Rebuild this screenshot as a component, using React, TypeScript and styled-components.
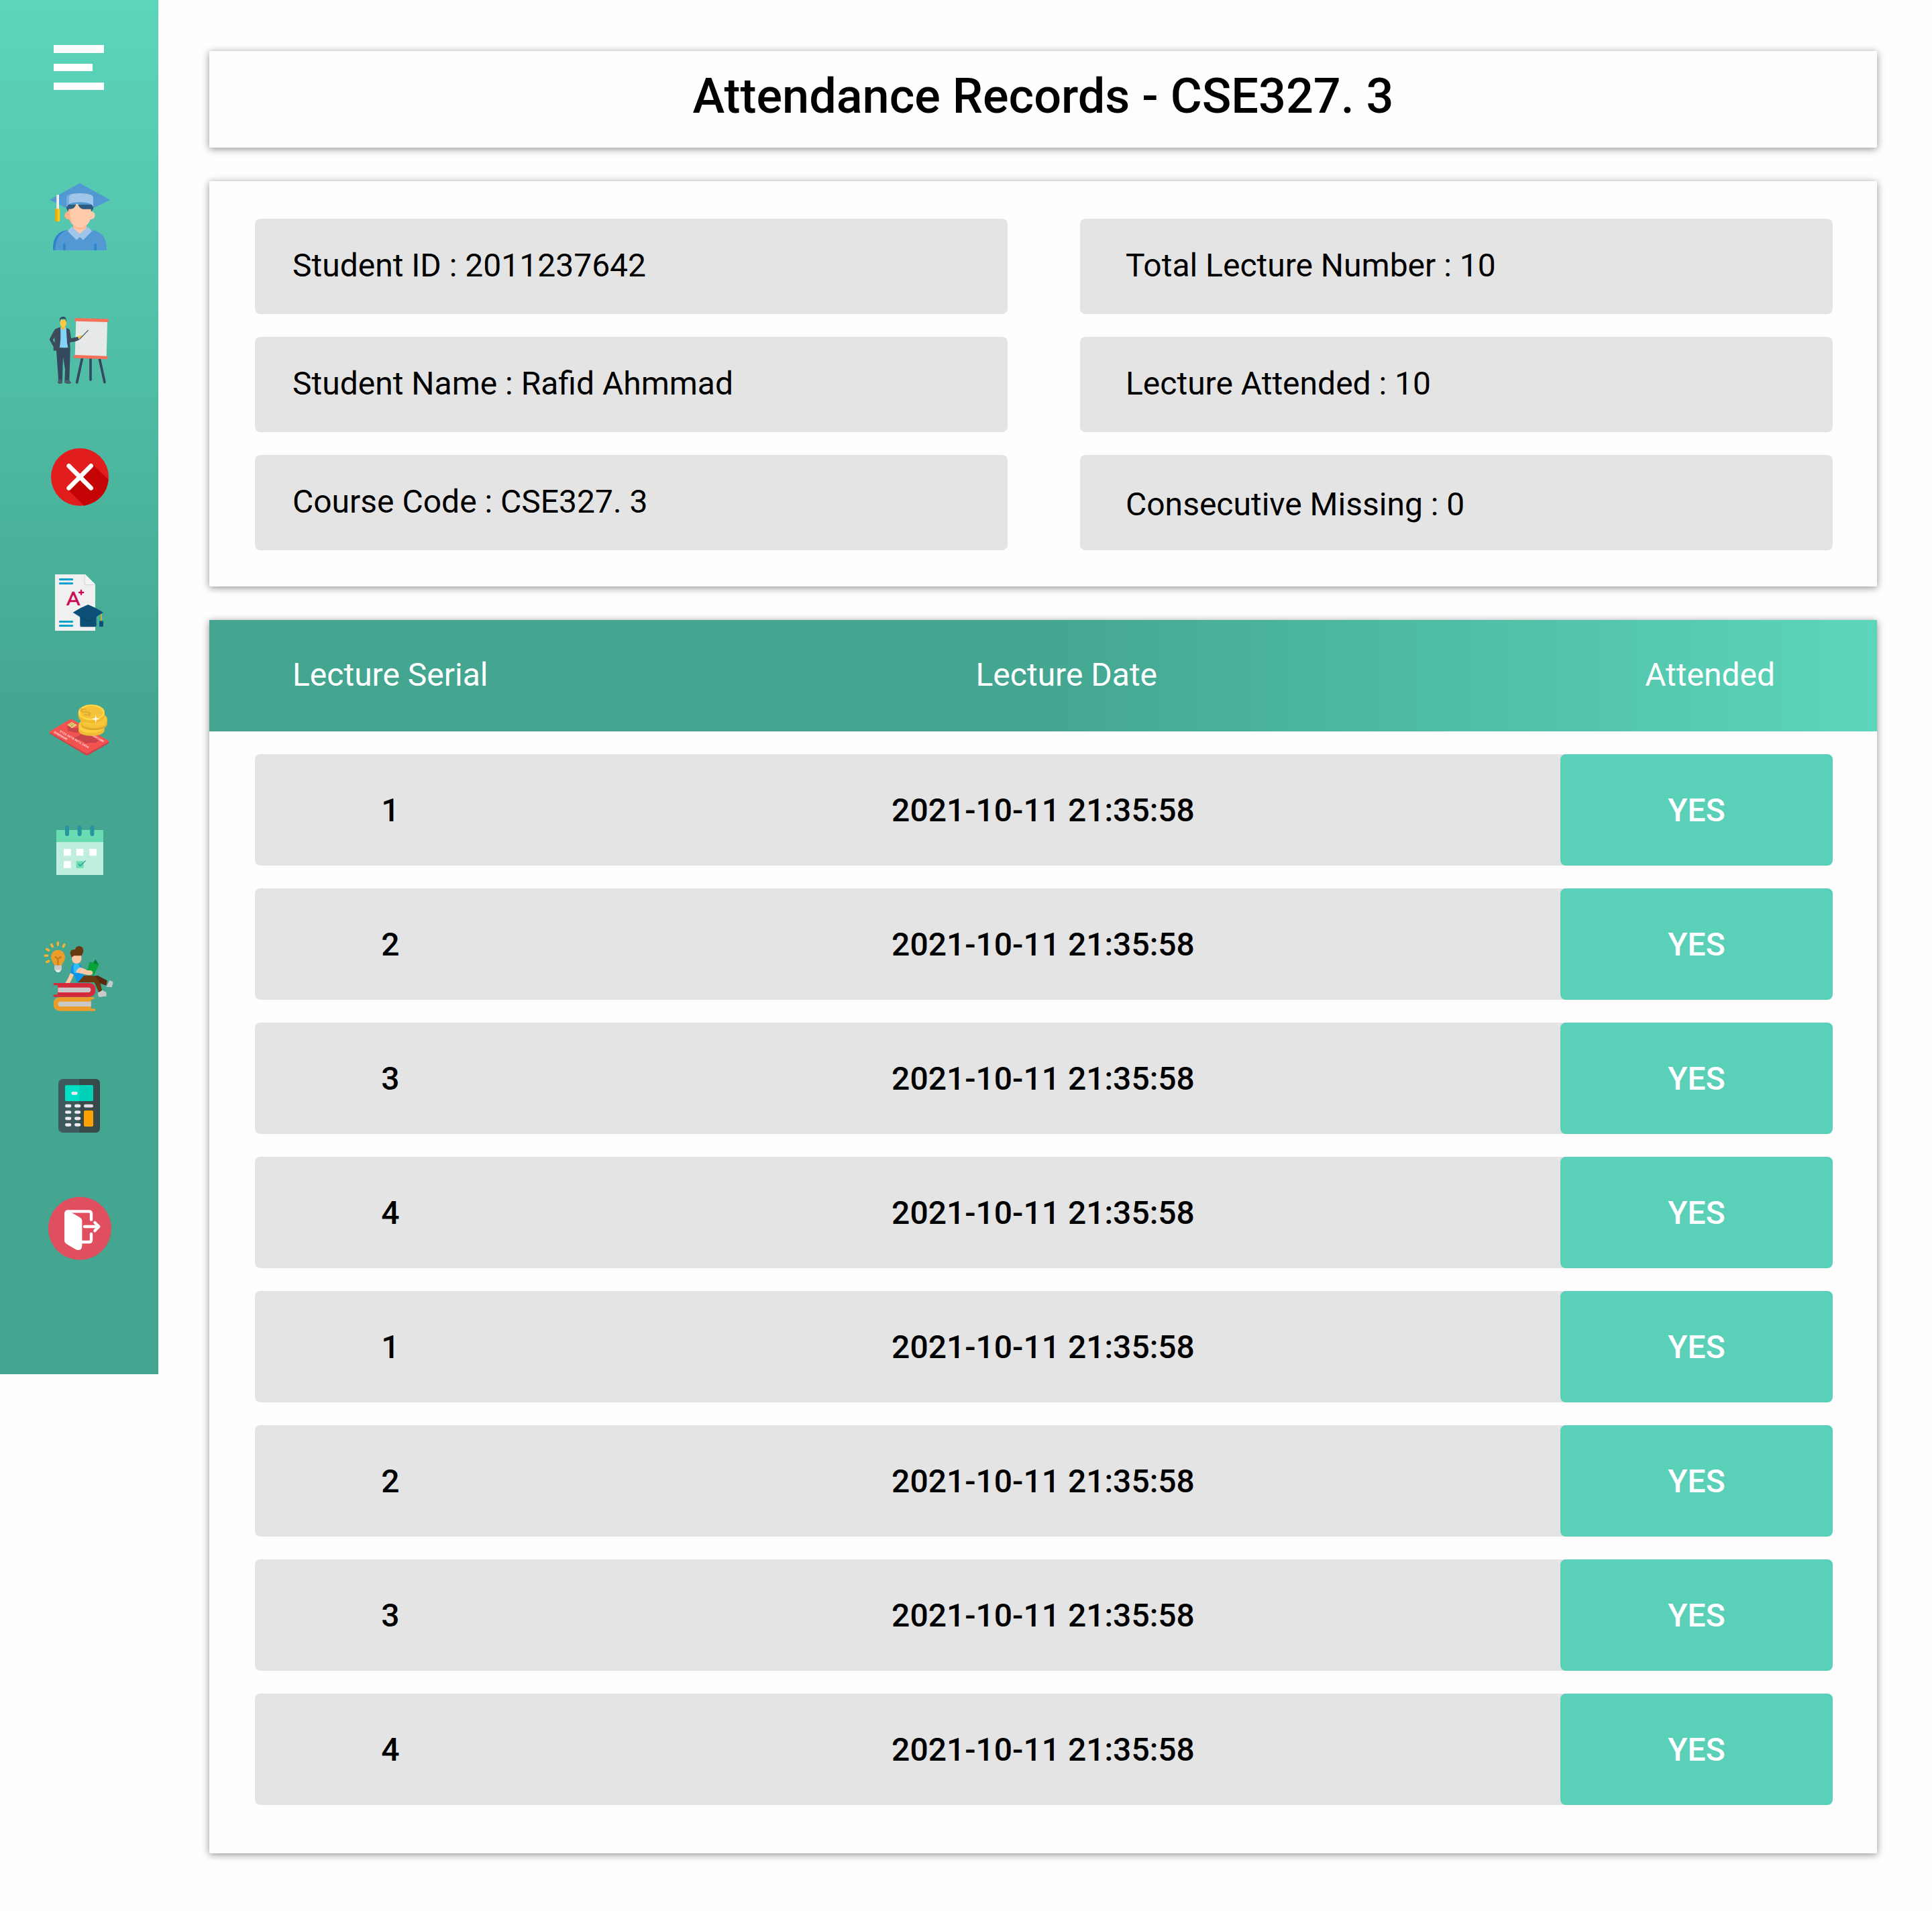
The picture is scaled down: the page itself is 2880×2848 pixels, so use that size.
import React from "react";
import styled, { createGlobalStyle } from "styled-components";

const GlobalStyle = createGlobalStyle`
  *, *::before, *::after { box-sizing: border-box; }
  body { margin: 0; background: #fefefe; font-family: Roboto, "Liberation Sans", sans-serif; color: #000; }
  h1, p { margin: 0; font-weight: inherit; }
`;

const Page = styled.div`
  display: flex;
  align-items: flex-start;
  width: 2880px;
  height: 2848px;
  overflow: hidden;
`;

const Sidebar = styled.nav`
  display: flex;
  flex-direction: column;
  flex: none;
  width: 236px;
  height: 2048px;
  padding: 67px 0 0 50px;
  background: linear-gradient(to bottom, #5cd6bb 0%, #44a691 52%);
`;

const Glyph = styled.svg<{ $h: number; $gap: number }>`
  display: block;
  flex: none;
  width: 140px;
  height: ${(p) => p.$h}px;
  margin-top: ${(p) => p.$gap}px;
`;

const MenuButton = styled.div`
  display: flex;
  flex-direction: column;
  justify-content: space-between;
  height: 67px;
  margin-left: 30px;
`;

const Bar = styled.span<{ $w: number }>`
  width: ${(p) => p.$w}px;
  height: 11.5px;
  background: #fff;
`;

const Main = styled.main`
  display: flex;
  flex-direction: column;
  gap: 50px;
  width: 2486px;
  margin: 76px 0 0 76px;
`;

const Card = styled.section`
  border-radius: 2px;
  background: #fefefe;
  box-shadow: 0 2px 12px rgba(0, 0, 0, 0.44);
`;

const TitleCard = styled(Card)`
  display: flex;
  justify-content: center;
  height: 144px;
  padding-top: 26px;
`;

const Title = styled.h1`
  font-size: 72px;
  line-height: 84px;
  font-weight: 500;
`;

const InfoCard = styled(Card)`
  display: grid;
  grid-template-columns: 1122px 1122px;
  grid-auto-rows: 142px;
  column-gap: 108px;
  row-gap: 34px;
  height: 604px;
  padding: 56px 66px 0 68px;
`;

const Field = styled.p<{ $indent: number; $drop?: number }>`
  padding: ${(p) => 42 + (p.$drop ?? 0)}px 0 0 ${(p) => p.$indent}px;
  border-radius: 8px;
  background: #e4e4e4;
  font-size: 48px;
  line-height: 56px;
`;

const TableCard = styled(Card)`
  height: 1838px;
`;

const HeadRow = styled.div`
  display: flex;
  justify-content: space-between;
  height: 166px;
  padding: 54px 152px 0 124px;
  background: linear-gradient(to left, #5cd6bb 0%, #44a691 50%);
  color: #fff;
  font-size: 48px;
  line-height: 56px;
`;

const Rows = styled.div`
  display: flex;
  flex-direction: column;
  gap: 34px;
  padding: 34px 66px 0 68px;
`;

const Row = styled.div`
  display: grid;
  grid-template-columns: 404px 1542px 406px;
  height: 166px;
  border-radius: 8px;
  background: #e4e4e4;
  font-size: 48px;
  line-height: 56px;
  font-weight: 500;
  text-align: center;
`;

const Cell = styled.div`
  padding-top: 56px;
`;

const Status = styled(Cell)`
  border-radius: 8px;
  background: #5bd0b8;
  color: #fff;
`;

const StudentIcon = () => (
  <Glyph viewBox="0 0 420 420" $h={140} $gap={116}>
    <path d="M72 143 207 69 342 143 268 180H146Z" fill="#5299d4" />
    <path d="M147 165h120v20l-8 10H155l-8-12z" fill="#2f5d82" />
    <path d="M148 176V134q0-20 59-20t60 20v42q-8-22-60-22t-59 22z" fill="#9fc5e8" />
    <path d="M148 176V134q0-14 24-17-14 7-14 18v28z" fill="#76acdc" />
    <path d="M177 240h60v40l-30 20-30-20z" fill="#ffb48c" />
    <path d="M177 268q30 12 60 0v20l-30 12-30-12z" fill="#ffcbaa" />
    <circle cx="157" cy="213" r="18" fill="#ffb28a" />
    <circle cx="257" cy="213" r="18" fill="#ffcbaa" />
    <path d="M157 185q28 2 34-24h7q6 22 24 24h35v28q-4 51-50 52-46-1-50-52z" fill="#ffcbaa" />
    <path d="M157 185h6v30q2 28 18 42-24-15-24-44z" fill="#ffb28a" />
    <path d="M87 366q-3-80 73-88l47 20 50-20q72 8 70 88 0 3-3 3H90q-3 0-3-3z" fill="#5299d4" />
    <path d="M87 366q-3-80 66-88-56 20-56 91h-7q-3 0-3-3z" fill="#3284c8" />
    <path d="M132 369v-26q0-4 5-4t6 4v26zM271 369v-26q0-4 5-4t6 4v26z" fill="#3284c8" />
    <path d="M177 262h60l-30 33z" fill="#ffcbaa" />
    <path d="M177 262q30 14 60 0l-6 8q-24 10-48 0z" fill="#ffb48c" />
    <path d="M171 263 207 295 242 263 262 283 222 323 207 310 192 323 152 283Z" fill="#9fc5e8" />
    <path d="M102 123l12-4v66h-12z" fill="#efefef" />
    <path d="M102 123l4-2v64h-4z" fill="#d8dee0" />
    <rect x="96" y="184" width="22" height="56" rx="4" fill="#ffc721" />
    <path d="M100 184h7v56h-7q-4 0-4-4v-48q0-4 4-4z" fill="#e8ac0b" />
  </Glyph>
);

const TeacherIcon = () => (
  <Glyph viewBox="0 0 420 420" $h={140} $gap={60}>
    <g stroke="#34495e" strokeWidth="11" strokeLinecap="round">
      <path d="M217 254 194 360M255 252V348M295 254 318 359" />
    </g>
    <path d="M190 84 330 88 326 243 185 240Z" fill="#e7e9e8" />
    <path d="M190 79 329 83M186 244 326 249" stroke="#f3705a" strokeWidth="14" strokeLinecap="round" />
    <path d="M101 205h61l2 20-4 125 8 13q-20 5-29-2l2-60-9-56-3 100-1 18q-10 4-19 0l2-20z" fill="#34495e" />
    <path d="M112 347h14l2 16q-10 5-19 0zM142 349h16l10 11q0 6-12 5l-17-4z" fill="#4b5d6f" />
    <path d="M119 114h28l9 88q-20 5-39 0z" fill="#84d3f8" />
    <path d="M121 111l-24 10q-8 10-26 47l18 32 0 17 22 3q13-28 9-109z" fill="#3e4b5d" />
    <path d="M146 115l15 8q5 20 7 40l31-8 5 15q-20 10-41 10l1 38-7-4-7-30z" fill="#3e4b5d" />
    <path d="M94 158l-8 12 9 13z" fill="#50bba4" />
    <path d="M119 80h27v22l-6 10v9q-7 5-15 0v-10l-6-10z" fill="#fcca45" />
    <path d="M117 92V76q3-10 16-10 12 0 13 12v14l-4-16h-20z" fill="#34495e" />
    <path d="M125 111q8 4 15 0v8q-8 8-16 1z" fill="#efb839" />
    <path d="M198 156q12-11 23-5-2 9-18 14z" fill="#fcca45" />
    <path d="M206 166 244 127" stroke="#34495e" strokeWidth="3.5" strokeLinecap="round" />
  </Glyph>
);

const CrossIcon = () => (
  <Glyph viewBox="0 0 420 420" $h={140} $gap={50}>
    <circle cx="207" cy="213" r="129" fill="#e21d1d" />
    <path d="M265 157 335 225Q324 318 226 341L152 268Z" fill="#c50505" />
    <path d="M158 163 257 262M257 163 158 262" stroke="#fff" strokeWidth="20" strokeLinecap="round" />
  </Glyph>
);

const GradesIcon = () => (
  <Glyph viewBox="0 600 420 360" $h={120} $gap={60}>
    <path d="M99 648H231L276 693V900H99q-3 0-3-3V651q0-3 3-3z" fill="#f0f0f0" />
    <path d="M228 650v40q0 5 5 5h42" fill="none" stroke="#d2d2d2" strokeWidth="3" />
    <path d="M231 648 276 692H235q-4 0-4-4z" fill="#f4f4f4" />
    <path d="M118 670.5h55M118 688.5h55M118 859.5h55M118 877.5h55" stroke="#06a2cd" strokeWidth="9" strokeLinecap="round" />
    <text
      x="146"
      y="786"
      fontSize="85"
      fontFamily="Roboto, sans-serif"
      fontWeight="400"
      fill="#c90b52"
      stroke="#c90b52"
      strokeWidth="1.5"
      strokeLinejoin="round"
      textLength="63"
      lengthAdjust="spacingAndGlyphs"
    >
      A
    </text>
    <path d="M204 729h19M213 719v19" stroke="#c90b52" strokeWidth="7" strokeLinecap="round" />
    <path d="M174 820l34 22v43h66v-10z" fill="#c8ccd0" />
    <path d="M208 834h73v42q0 6-6 6h-61q-6 0-6-6z" fill="#0c5078" />
    <path d="M207 836 244 858 281 836" stroke="#083f62" strokeWidth="4" fill="none" />
    <path d="M176 818Q210 796 244 783 280 797 312 818 280 840 244 855 208 840 176 818Z" fill="#0c5078" />
    <path d="M303 826v32" stroke="#d6b02c" strokeWidth="5.5" />
    <rect x="294" y="856" width="18" height="26" rx="5" fill="#0c5078" />
  </Glyph>
);

const FeesIcon = () => (
  <Glyph viewBox="0 0 420 360" $h={120} $gap={70}>
    <path d="M72 185l94-50 170 90v8l-91 53q-6 3-12 0L72 190z" fill="#c9434a" />
    <path d="M72 180 162 127q6-3 12 0L336 222q1 3-2 5l-89 50q-6 3-12 0L74 186q-3-3-2-6z" fill="#f05350" />
    <path d="M150 160q14-10 30 6l20-2 8 16-16 6-20-4-18-4zM184 208l30-16 50 8 28 22-16 10-22-2-20 4-24-16-24-4z" fill="#c9434a" />
    <path d="M151 150 172 138 195 152 172 166Z" fill="#ecd17b" />
    <path d="M158 146l22 14M166 158l20-12M160 151l12-8M174 141l-4 20" stroke="#a8843c" strokeWidth="1.5" />
    <g fill="#fbd9d8" fontFamily="Roboto, sans-serif" fontWeight="700">
      <text transform="matrix(.87 .5 -.4 .85 116 182)" fontSize="14" textLength="148">0123 5678 9012 3456</text>
      <text transform="matrix(.87 .5 -.4 .85 90 186)" fontSize="13" textLength="68">SURENAME</text>
      <text transform="matrix(.87 .5 -.4 .85 252 195)" fontSize="13" textLength="70">CREDIT CARD</text>
    </g>
    <path d="M201 155v20c0 34 116 34 116 0v-20z" fill="#f0bd35" />
    <ellipse cx="259" cy="155" rx="58" ry="32" fill="#ffcf40" />
    <path d="M211 130v18c0 36 118 36 118 0v-22z" fill="#dfaa2b" />
    <ellipse cx="270" cy="126" rx="59" ry="34" fill="#f7c73a" />
    <path d="M211 130v9c0 36 118 36 118 0v-9c0 34-118 34-118 0z" fill="#f5c238" />
    <path d="M200 95v16c0 42 118 42 118 0V95z" fill="#f0b92f" />
    <ellipse cx="259" cy="95" rx="59" ry="35" fill="#ffd54a" />
    <ellipse cx="259" cy="95" rx="50" ry="28" fill="#f5c338" />
    <text transform="matrix(.9 -.35 .75 .66 232 114)" fontSize="60" fontFamily="Roboto, sans-serif" fontWeight="700" fill="#dfaa30">$</text>
    <path d="M278 106 281 121 296 125 281 128 278 143 275 128 260 125 275 121Z" fill="#fff" />
  </Glyph>
);

const CalendarIcon = () => (
  <Glyph viewBox="0 540 420 360" $h={120} $gap={60}>
    <path d="M102 622h210v200H102z" fill="#bfeedf" />
    <path d="M102 622h210v53H102z" fill="#69ddb1" />
    <path d="M150 609v30M206 609v30M262 609v30" stroke="#25969c" strokeWidth="18" strokeLinecap="round" />
    <path d="M135 705h32v31h-32zM191 705h32v31h-32zM250 705h32v31h-32zM135 760h32v31h-32z" fill="#fff" />
    <path d="M191 760h33v31h-33z" fill="#69ddb1" />
    <path d="M201 773 209 781 233 758" fill="none" stroke="#25919a" strokeWidth="3.5" />
  </Glyph>
);

const LearningIcon = () => (
  <Glyph viewBox="0 0 420 420" $h={140} $gap={60}>
    <path d="M109 45v10M80 53l5 9M138 53l-5 9M59 74l9 5M52 103h10M59 131l9-4" stroke="#ffb032" strokeWidth="10.5" strokeLinecap="round" />
    <path d="M109 77c18 0 32 14 32 32 0 16-8 22-15 37H93c-6-15-15-21-15-37 0-18 13-32 31-32z" fill="#ec9c2b" />
    <path d="M97 108l12 10 13-10M109 118v28" fill="none" stroke="#c27b20" strokeWidth="7" strokeLinecap="round" />
    <path d="M93 146h33v20H93z" fill="#c9c9c9" />
    <path d="M96 166h27q-2 11-13 11t-14-11z" fill="#ececec" />
    <path d="M240 196l48-4 41 22 0 2-4 20-29-10q-12-8-56-30z" fill="#54290d" />
    <path d="M196 222 215 192H262q26 6 36 34l8 32-14 8-20-44z" fill="#66390f" />
    <path d="M340 213l15 6q2 4-5 25l-24-2q-2-4 4-8zM308 257l17 10v16q-2 3-32 4-4-3-5-20 6 0 20-10z" fill="#c9c9c9" />
    <path d="M166 178l14 8q-8 24-18 39h-20q14-20 24-47z" fill="#ffc7a6" />
    <path d="M178 138q-12 16-13 42l16 8 15 36 29-31-14-48z" fill="#0d94e8" />
    <path d="M183 137q20-4 25 18l-10 24-16 3q-8-28 1-45z" fill="#35bdfb" />
    <path d="M172 100h42v18q-2 20-22 20t-20-20z" fill="#ffc7a6" />
    <path d="M170 110q-2-8-6-16-2-20 22-19 4-16 20-15 24 5 14 32l-5 11h-34z" fill="#66390f" />
    <path d="M277 119l14 23-5 2-20-8z" fill="#057f2f" />
    <path d="M252 130l40 15-23 47-32-16z" fill="#08a33b" />
    <path d="M209 155q20 5 29 13l16 1q14 3 10 14-3 8-20 6l-54-11q0-14 19-23z" fill="#ffc7a6" />
    <path d="M93 225H246q31 0 31 31t-31 31H93q-5 0-5-5t5-5h15v-42H93q-5 0-5-5t5-5z" fill="#d52a3c" />
    <path d="M109 245H246q10 0 10 11t-10 11H109z" fill="#c9c9c9" />
    <path d="M120 288H268q4 0 4 5t-4 5h-11v42h16q4 0 4 5t-4 5H120q-31 0-31-31t31-31z" fill="#ec9c2b" />
    <path d="M257 308H120q-10 0-10 11t10 11h137z" fill="#c9c9c9" />
    <path d="M256 222h18l18 44 14-8-8-32-14-20h-28z" fill="#66390f" />
    <path d="M308 257l17 10v16q-2 3-32 4-4-3-5-20 6 0 20-10z" fill="#c9c9c9" />
  </Glyph>
);

const CalculatorIcon = () => (
  <Glyph viewBox="0 0 420 360" $h={120} $gap={60}>
    <rect x="111" y="54" width="186" height="240" rx="20" fill="#3f5a5c" />
    <path d="M204 54h73q20 0 20 20v200q0 20-20 20h-73z" fill="#394949" />
    <rect x="141" y="82" width="126" height="71" rx="5" fill="#00e0c7" />
    <path d="M204 82h58q5 0 5 5v61q0 5-5 5h-58z" fill="#00cfb7" />
    <path
      d="M176 118h14M148 174.5h14M190 174.5h14M148 202.5h14M190 202.5h14M148 230.5h14M190 230.5h14M148 259h14M190 259h14"
      stroke="#ecebf1"
      strokeWidth="14"
      strokeLinecap="round"
    />
    <path d="M232 174.5h28" stroke="#e1dfe6" strokeWidth="14" strokeLinecap="round" />
    <rect x="225" y="195" width="42" height="72" rx="6" fill="#ffa100" />
  </Glyph>
);

const LogoutIcon = () => (
  <Glyph viewBox="0 540 420 420" $h={140} $gap={60}>
    <circle cx="207" cy="722" r="141" fill="#e04f5f" />
    <path d="M157 646H248q10 0 10 10v27M258 747v26q0 10-10 10H210" fill="none" stroke="#fff" strokeWidth="13" strokeLinecap="round" />
    <path d="M138 657q0-18 18-18 6 6 14 13l36 20q11 6 11 18v108q0 28-29 18l-40-24q-10-6-10-18z" fill="#fff" />
    <path d="M228 714H290M274 696 292 714 274 733" fill="none" stroke="#fff" strokeWidth="13" strokeLinecap="round" strokeLinejoin="round" />
  </Glyph>
);

const fields = [
  { label: "Student ID", value: "2011237642", indent: 56 },
  { label: "Total Lecture Number", value: "10", indent: 68 },
  { label: "Student Name", value: "Rafid Ahmmad", indent: 56 },
  { label: "Lecture Attended", value: "10", indent: 68 },
  { label: "Course Code", value: "CSE327. 3", indent: 56 },
  { label: "Consecutive Missing", value: "0", indent: 68, drop: 4 },
];

const lectures = [1, 2, 3, 4, 1, 2, 3, 4].map((serial) => ({
  serial,
  date: "2021-10-11 21:35:58",
  attended: "YES",
}));

export default function App() {
  return (
    <Page>
      <GlobalStyle />
      <Sidebar>
        <MenuButton>
          <Bar $w={75} />
          <Bar $w={57.5} />
          <Bar $w={75} />
        </MenuButton>
        <StudentIcon />
        <TeacherIcon />
        <CrossIcon />
        <GradesIcon />
        <FeesIcon />
        <CalendarIcon />
        <LearningIcon />
        <CalculatorIcon />
        <LogoutIcon />
      </Sidebar>
      <Main>
        <TitleCard>
          <Title>Attendance Records - CSE327. 3</Title>
        </TitleCard>
        <InfoCard>
          {fields.map((f) => (
            <Field key={f.label} $indent={f.indent} $drop={f.drop}>
              {f.label} : {f.value}
            </Field>
          ))}
        </InfoCard>
        <TableCard>
          <HeadRow>
            <span>Lecture Serial</span>
            <span>Lecture Date</span>
            <span>Attended</span>
          </HeadRow>
          <Rows>
            {lectures.map((l, i) => (
              <Row key={i}>
                <Cell>{l.serial}</Cell>
                <Cell>{l.date}</Cell>
                <Status>{l.attended}</Status>
              </Row>
            ))}
          </Rows>
        </TableCard>
      </Main>
    </Page>
  );
}
